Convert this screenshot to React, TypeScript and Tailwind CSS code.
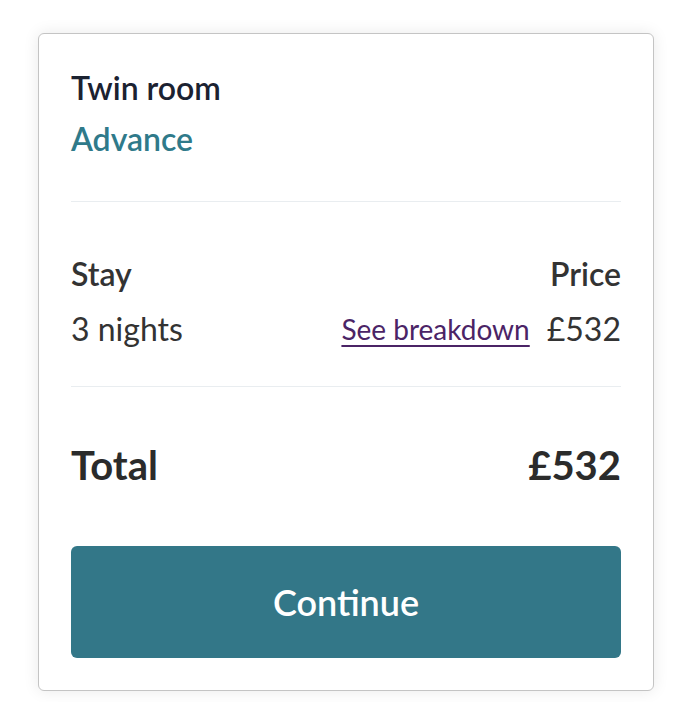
const App = () => {
  return (
    <div className="min-h-[702px] w-[680px] bg-white pt-[33px] pl-[38px] font-['Lato',sans-serif]">
      <div className="w-[616px] rounded-md border border-[#c4c4c4] bg-white p-8 shadow-[0_0_16px_rgba(0,0,0,0.09)]">
        <div className="pb-[40px]">
          <h2 className="text-[32px] font-semibold leading-[44px] text-[#1b2231]">Twin room</h2>
          <p className="mt-[7px] text-[32px] font-semibold leading-[44px] text-[#2f7a8a]">Advance</p>
        </div>

        <div className="border-t border-[#e9edf0]" />

        <div className="pt-[50px] pb-[35px]">
          <div className="flex items-center justify-between text-[32px] font-semibold leading-[44px] text-[#333]">
            <span>Stay</span>
            <span>Price</span>
          </div>
          <div className="mt-[11px] flex items-center justify-between text-[32px] leading-[44px] text-[#333]">
            <span>3 nights</span>
            <div className="flex items-center gap-[17px]">
              <a href="#" className="text-[28px] leading-[42px] text-[#4b2466] underline decoration-2 underline-offset-[5px]">See breakdown</a>
              <span>£532</span>
            </div>
          </div>
        </div>

        <div className="border-t border-[#e9edf0]" />

        <div className="flex items-center justify-between pt-[54px] text-[40px] font-bold leading-[48px] text-[#2b2b2b]">
          <span>Total</span>
          <span>£532</span>
        </div>

        <button className="mt-[57px] flex h-[112px] w-full items-center justify-center rounded-md bg-[#337788] text-[36px] font-semibold text-white">
          Continue
        </button>
      </div>
    </div>
  );
};

export default App;
